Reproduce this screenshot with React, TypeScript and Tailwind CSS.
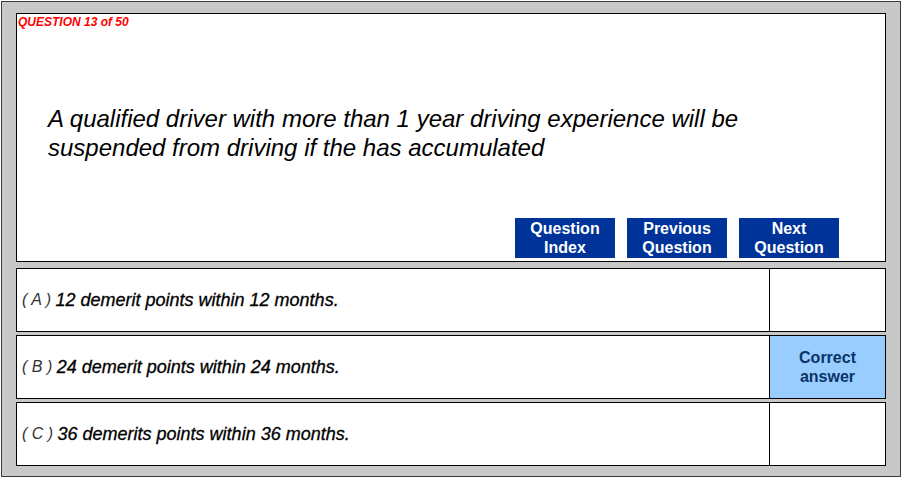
import React from "react";

const font = { fontFamily: '"Liberation Sans", Arial, sans-serif' };

function OptionRow({ letter, text, correct }: { letter: string; text: string; correct?: boolean }) {
  return (
    <div className="flex h-[64px] border border-black bg-white">
      <div className="flex flex-1 items-center pl-[5px] border-r border-black">
        <span className="italic text-[16px] text-[#333] whitespace-pre">{`( ${letter} ) `}</span>
        <span className="italic text-[18px] text-black [-webkit-text-stroke:0.3px_black]">{text}</span>
      </div>
      <div
        className={`flex w-[115px] items-center justify-center text-center text-[16px] font-bold leading-[19px] ${
          correct ? "bg-[#99ccff] text-[#0a3366]" : "bg-white"
        }`}
      >
        {correct ? (
          <span>
            Correct
            <br />
            answer
          </span>
        ) : null}
      </div>
    </div>
  );
}

function NavButton({ l1, l2 }: { l1: string; l2: string }) {
  return (
    <div className="flex h-[40px] w-[100px] items-center justify-center bg-[#003399] text-center text-[16px] font-bold leading-[19px] text-white">
      <span>
        {l1}
        <br />
        {l2}
      </span>
    </div>
  );
}

export default function App() {
  return (
    <div className="h-[478px] w-[902px] bg-white p-px" style={font}>
      <div className="flex h-[476px] w-[900px] flex-col border border-[#3a3a3a] bg-[#c8c8c8] pl-[14px] pr-[14px] pt-[11px] pb-[10px]">
        <div className="flex h-[249px] flex-col border border-black bg-white">
          <div className="pl-px pt-px text-[12px] font-bold italic leading-[14px] text-[#ff0000]">QUESTION 13 of 50</div>
          <div className="mt-[75px] pl-[31px] text-[24px] italic leading-[29px] text-black">
            A qualified driver with more than 1 year driving experience will be
            <br />
            suspended from driving if the has accumulated
          </div>
          <div className="flex-1" />
          <div className="flex justify-end gap-3 pr-[46px] pb-[3px]">
            <NavButton l1="Question" l2="Index" />
            <NavButton l1="Previous" l2="Question" />
            <NavButton l1="Next" l2="Question" />
          </div>
        </div>
        <div className="mt-[6px] flex flex-col gap-[3px]">
          <OptionRow letter="A" text="12 demerit points within 12 months." />
          <OptionRow letter="B" text="24 demerit points within 24 months." correct />
          <OptionRow letter="C" text="36 demerits points within 36 months." />
        </div>
      </div>
    </div>
  );
}
